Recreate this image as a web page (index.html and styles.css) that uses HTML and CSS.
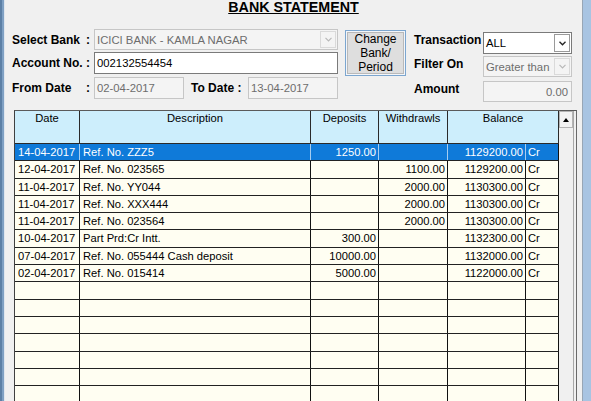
FILE: index.html
```html
<!DOCTYPE html>
<html>
<head>
<meta charset="utf-8">
<title>Bank Statement</title>
<link rel="stylesheet" href="styles.css">
</head>
<body>
<div class="window">
  <div class="frame-left"></div>
  <div class="content">
    <h1 class="title">BANK STATEMENT</h1>
    <div class="form">
      <div class="left">
        <div class="frow r1">
          <span class="lbl">Select Bank</span><span class="colon">:</span>
          <div class="field combo disabled grow">
            <span class="val">ICICI BANK - KAMLA NAGAR</span>
            <span class="arrow"><svg width="7" height="5" viewBox="0 0 7 5"><polyline points="0.5,0.8 3.5,3.8 6.5,0.8" fill="none" stroke="currentColor" stroke-width="1.2"/></svg></span>
          </div>
        </div>
        <div class="frow r2">
          <span class="lbl">Account No.</span><span class="colon">:</span>
          <div class="field grow"><span class="val">002132554454</span></div>
        </div>
        <div class="frow r3">
          <span class="lbl">From Date</span><span class="colon">:</span>
          <div class="field disabled from"><span class="val">02-04-2017</span></div>
          <span class="lbl2">To Date :</span>
          <div class="field disabled grow"><span class="val">13-04-2017</span></div>
        </div>
      </div>
      <div class="btn-wrap">
        <div class="btn">Change<br>Bank/<br>Period</div>
      </div>
      <div class="right">
        <div class="rrow rr1">
          <span class="rlbl">Transaction</span>
          <div class="field combo rfield">
            <span class="val">ALL</span>
            <span class="arrow dark"><svg width="7" height="5" viewBox="0 0 7 5"><polyline points="0.5,0.8 3.5,3.8 6.5,0.8" fill="none" stroke="currentColor" stroke-width="1.3"/></svg></span>
          </div>
        </div>
        <div class="rrow rr2">
          <span class="rlbl">Filter On</span>
          <div class="field combo disabled rfield">
            <span class="val">Greater than</span>
            <span class="arrow"><svg width="7" height="5" viewBox="0 0 7 5"><polyline points="0.5,0.8 3.5,3.8 6.5,0.8" fill="none" stroke="currentColor" stroke-width="1.2"/></svg></span>
          </div>
        </div>
        <div class="rrow rr3">
          <span class="rlbl">Amount</span>
          <div class="field disabled rfield num"><span class="val">0.00</span></div>
        </div>
      </div>
    </div>

    <div class="gridbox">
      <div class="tbl">
        <div class="thead">
          <div class="th">Date</div>
          <div class="th">Description</div>
          <div class="th">Deposits</div>
          <div class="th">Withdrawls</div>
          <div class="th">Balance</div>
        </div>
        <div class="row sel"><div class="td">14-04-2017</div><div class="td">Ref. No. ZZZ5</div><div class="td n">1250.00</div><div class="td n"></div><div class="td n">1129200.00</div><div class="td cr">Cr</div></div>
        <div class="row"><div class="td">12-04-2017</div><div class="td">Ref. No. 023565</div><div class="td n"></div><div class="td n">1100.00</div><div class="td n">1129200.00</div><div class="td cr">Cr</div></div>
        <div class="row"><div class="td">11-04-2017</div><div class="td">Ref. No. YY044</div><div class="td n"></div><div class="td n">2000.00</div><div class="td n">1130300.00</div><div class="td cr">Cr</div></div>
        <div class="row"><div class="td">11-04-2017</div><div class="td">Ref. No. XXX444</div><div class="td n"></div><div class="td n">2000.00</div><div class="td n">1130300.00</div><div class="td cr">Cr</div></div>
        <div class="row"><div class="td">11-04-2017</div><div class="td">Ref. No. 023564</div><div class="td n"></div><div class="td n">2000.00</div><div class="td n">1130300.00</div><div class="td cr">Cr</div></div>
        <div class="row"><div class="td">10-04-2017</div><div class="td">Part Prd:Cr Intt.</div><div class="td n">300.00</div><div class="td n"></div><div class="td n">1132300.00</div><div class="td cr">Cr</div></div>
        <div class="row"><div class="td">07-04-2017</div><div class="td">Ref. No. 055444 Cash deposit</div><div class="td n">10000.00</div><div class="td n"></div><div class="td n">1132000.00</div><div class="td cr">Cr</div></div>
        <div class="row"><div class="td">02-04-2017</div><div class="td">Ref. No. 015414</div><div class="td n">5000.00</div><div class="td n"></div><div class="td n">1122000.00</div><div class="td cr">Cr</div></div>
        <div class="row"><div class="td"></div><div class="td"></div><div class="td"></div><div class="td"></div><div class="td"></div><div class="td"></div></div>
        <div class="row"><div class="td"></div><div class="td"></div><div class="td"></div><div class="td"></div><div class="td"></div><div class="td"></div></div>
        <div class="row"><div class="td"></div><div class="td"></div><div class="td"></div><div class="td"></div><div class="td"></div><div class="td"></div></div>
        <div class="row"><div class="td"></div><div class="td"></div><div class="td"></div><div class="td"></div><div class="td"></div><div class="td"></div></div>
        <div class="row"><div class="td"></div><div class="td"></div><div class="td"></div><div class="td"></div><div class="td"></div><div class="td"></div></div>
        <div class="row"><div class="td"></div><div class="td"></div><div class="td"></div><div class="td"></div><div class="td"></div><div class="td"></div></div>
        <div class="row"><div class="td"></div><div class="td"></div><div class="td"></div><div class="td"></div><div class="td"></div><div class="td"></div></div>
      </div>
      <div class="sb">
        <div class="sb-up"><span class="tri"></span></div>
      </div>
      <div class="sb-gap"></div>
    </div>
  </div>
  <div class="frame-right"></div>
</div>
</body>
</html>
```

FILE: styles.css
```css
* { box-sizing: border-box; margin: 0; padding: 0; }
html, body { width: 591px; height: 401px; overflow: hidden; }
body {
  font-family: "Liberation Sans", Arial, sans-serif;
  background: #f0f0f0;
  color: #000;
}
.window { display: flex; height: 401px; }
.frame-left {
  width: 5px; flex: none;
  background: linear-gradient(to right, #5d80a6 0, #5d80a6 2px, #7fa0c3 2px, #7fa0c3 4px, #dfe6ee 4px);
}
.frame-right {
  width: 9px; flex: none;
  background: linear-gradient(to right, #98a6b5 0, #98a6b5 1px, #a8c4e2 1px);
}
.content { flex: 1; min-width: 0; background: #f0f0f0; }

.title {
  font-size: 14.3px; font-weight: bold; text-align: center;
  text-decoration: underline; line-height: 16px; height: 16px;
  margin-top: -1px;
}

.form { display: flex; align-items: flex-start; height: 73px; margin-top: 14px; padding-left: 7px; }
.left { width: 326px; flex: none; }
.frow { display: flex; align-items: center; }
.r1 { height: 21px; margin-bottom: 2px; }
.r2 { height: 22px; margin-bottom: 3px; }
.r3 { height: 22px; }
.lbl { font-size: 12px; font-weight: bold; width: 74px; flex: none; }
.colon { font-size: 12px; font-weight: bold; width: 8px; flex: none; }
.lbl2 { font-size: 12px; font-weight: bold; width: 57px; flex: none; margin-left: 7px; }

.field {
  height: 100%;
  border: 1px solid #7a7a7a;
  background: #fff;
  font-size: 11.3px;
  display: flex; align-items: center;
  padding: 0 0 0 2px;
  white-space: nowrap; overflow: hidden;
}
.field .val { flex: 1; }
.grow { flex: 1; }
.from { width: 90px; flex: none; }
.disabled { background: #f4f4f4; border-color: #c6c6c6; color: #6d6d6d; }
.num .val { text-align: right; padding-right: 3px; }

.arrow {
  width: 16px; height: 100%; flex: none;
  display: flex; align-items: center; justify-content: center;
  border: 1px solid #dadada; background: #f4f4f4; color: #b8b8b8;
  margin-right: 1px;
}
.combo { padding-right: 0; }
.combo .arrow { height: calc(100% - 2px); }
.arrow.dark { border-color: #9a9a9a; background: #fff; color: #222; }

.btn-wrap {
  width: 61px; height: 46px; flex: none;
  margin-left: 7px; margin-top: 1px;
  border: 1px solid #7ca6cf; padding: 1px; background: #f3f6fa;
}
.btn {
  height: 100%;
  background: #dedede;
  box-shadow: inset 0 0 0 1px #b9b9b9;
  font-size: 12px; line-height: 14px; text-align: center;
}

.right { width: 158px; flex: none; margin-left: 8px; margin-top: 3px; }
.rrow { display: flex; align-items: flex-start; }
.rr1 { height: 22px; margin-bottom: 2px; }
.rr2 { height: 21px; margin-bottom: 4px; }
.rr3 { height: 21px; }
.rlbl { width: 69px; flex: none; font-size: 12px; font-weight: bold; line-height: 16px; }
.rfield { width: 89px; flex: none; }

.gridbox {
  display: flex;
  margin-left: 9px; margin-top: 8px;
  width: 563px; height: 300px;
  border-top: 1px solid #5a5a5a;
  border-left: 1px solid #404040;
  border-right: 1px solid #6a6a6a;
}
.tbl { width: 544px; flex: none; background: #fffef2; font-size: 11.2px; }
.thead {
  display: grid;
  grid-template-columns: 65px 231px 68px 69px 111px;
  height: 33px;
  border-bottom: 1px solid #2a2a2a;
  background: #cdeefc;
}
.th {
  border-right: 1px solid #2a2a2a;
  text-align: center; line-height: 14px; padding-top: 0;
}
.row {
  display: grid;
  grid-template-columns: 65px 231px 68px 69px 78px 33px;
  height: 17.3px;
  border-bottom: 1px solid #222;
}
.td {
  border-right: 1px solid #111;
  line-height: 16px; padding: 0 2px 0 3px;
  white-space: nowrap; overflow: hidden;
}
.td.n { text-align: right; padding-right: 2px; }
.td.cr { padding-left: 2px; }
.row.sel { background: #0f7ad9; color: #fff; }
.row.sel .td { border-right-color: #a6cdf0; }
.row.sel .td:last-child { border-right-color: #111; }

.sb { width: 15px; flex: none; background: #f0f0f0; border-right: 1px solid #a8a8a8; }
.sb-up {
  height: 17px;
  border: 1px solid #b4b4b4;
  background: #f3f3f3;
  display: flex; align-items: center; justify-content: center;
}
.tri {
  width: 0; height: 0;
  border-left: 3px solid transparent;
  border-right: 3px solid transparent;
  border-bottom: 4px solid #000;
}
.sb-gap { flex: 1; background: #f0f0f0; }
```
